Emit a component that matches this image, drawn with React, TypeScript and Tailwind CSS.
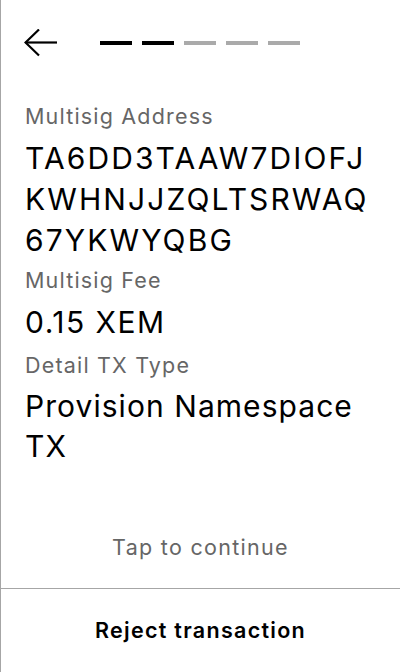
import React from 'react';

const steps = [true, true, false, false, false];

const Field: React.FC<{ label: string; value: string; labelClass?: string; valueClass?: string }> = ({
  label,
  value,
  labelClass = '',
  valueClass = '',
}) => (
  <div>
    <p className={`text-[21.5px] leading-[24px] tracking-[0.055em] text-[#666666] ${labelClass}`}>{label}</p>
    <p className={`text-[30px] text-black ${valueClass}`}>{value}</p>
  </div>
);

const App: React.FC = () => {
  return (
    <div
      className="w-[400px] h-[672px] bg-white border-l border-[#a6a6a6] flex flex-col overflow-hidden"
      style={{ fontFamily: 'Inter, "Noto Sans", sans-serif' }}
    >
      {/* Header */}
      <div className="flex items-center h-[26px] mt-[30px] pl-[23px]">
        <svg width="34" height="28" viewBox="0 0 34 28" fill="none" stroke="black" strokeWidth="2.2">
          <path d="M1.5 13.5 H33" />
          <path d="M15 0.5 L1.5 13.5 L15 26.5" />
        </svg>
        <div className="flex gap-[10px] ml-[42px]">
          {steps.map((done, i) => (
            <div key={i} className={`w-[32px] h-[4px] ${done ? 'bg-black' : 'bg-[#aaaaaa]'}`} />
          ))}
        </div>
      </div>

      {/* Details */}
      <div className="pl-[24px] pr-[12px] mt-[48px]">
        <Field
          label="Multisig Address"
          value="TA6DD3TAAW7DIOFJ KWHNJJZQLTSRWAQ 67YKWYQBG"
          valueClass="leading-[41px] mt-[10px] tracking-[0.07em]"
        />
        <Field
          label="Multisig Fee"
          value="0.15 XEM"
          labelClass="mt-[7px]"
          valueClass="leading-[42px] mt-[9px] tracking-[0.05em]"
        />
        <Field
          label="Detail TX Type"
          value="Provision Namespace TX"
          labelClass="mt-[10px]"
          valueClass="leading-[40px] mt-[9px] tracking-[0.035em]"
        />
      </div>

      <div className="flex-1" />

      <p className="text-center text-[21.5px] leading-[24px] tracking-[0.06em] text-[#666666] mb-[29px]">
        Tap to continue
      </p>

      <div className="h-px bg-[#a6a6a6]" />

      <button className="h-[83px] w-full text-center text-[21.5px] font-semibold tracking-[0.06em] text-black">
        Reject transaction
      </button>
    </div>
  );
};

export default App;
